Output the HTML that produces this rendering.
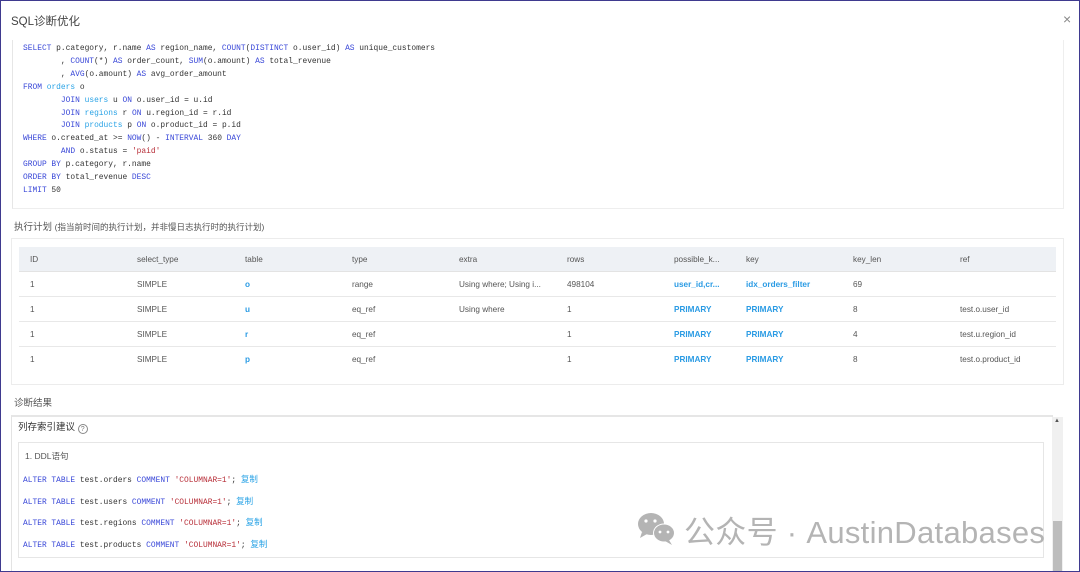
<!DOCTYPE html>
<html style="width:1080px;height:572px;overflow:hidden"><head><meta charset="utf-8"><style>
*{margin:0;padding:0;box-sizing:border-box}
body{width:1080px;height:572px;overflow:hidden;background:#fff;font-family:"Liberation Sans","Noto Sans CJK SC",sans-serif;color:#333;position:relative}
.abs{position:absolute;white-space:nowrap}
.mono{font-family:"Liberation Mono","Noto Sans CJK SC",monospace;font-size:7.9px;color:#333}
.k{color:#3a48d8}.t{color:#2aa3e6}.s{color:#b8303a}
.sm{font-size:8.2px;color:#555}
.lnk{color:#2a9be4;font-weight:bold}
.cp{font-family:'Liberation Sans','Noto Sans CJK SC',sans-serif;font-size:8.5px}
</style></head><body>
<div class="abs" style="left:11px;top:13px;font-size:11.5px;color:#444">SQL诊断优化</div>
<div class="abs" style="left:1063px;top:11px;font-size:14px;color:#888">×</div>
<div class="abs" style="left:12px;top:40px;width:1052px;height:169px;border-left:1px solid #e6e6e6;border-bottom:1px solid #eee;border-right:1px solid #eee"></div>
<div class="abs mono" style="left:23px;top:43px;line-height:12.9px">
<span class="k">SELECT</span> p.category, r.name <span class="k">AS</span> region_name, <span class="k">COUNT</span>(<span class="k">DISTINCT</span> o.user_id) <span class="k">AS</span> unique_customers<br>
&nbsp;&nbsp;&nbsp;&nbsp;&nbsp;&nbsp;&nbsp;&nbsp;, <span class="k">COUNT</span>(*) <span class="k">AS</span> order_count, <span class="k">SUM</span>(o.amount) <span class="k">AS</span> total_revenue<br>
&nbsp;&nbsp;&nbsp;&nbsp;&nbsp;&nbsp;&nbsp;&nbsp;, <span class="k">AVG</span>(o.amount) <span class="k">AS</span> avg_order_amount<br>
<span class="k">FROM</span> <span class="t">orders</span> o<br>
&nbsp;&nbsp;&nbsp;&nbsp;&nbsp;&nbsp;&nbsp;&nbsp;<span class="k">JOIN</span> <span class="t">users</span> u <span class="k">ON</span> o.user_id = u.id<br>
&nbsp;&nbsp;&nbsp;&nbsp;&nbsp;&nbsp;&nbsp;&nbsp;<span class="k">JOIN</span> <span class="t">regions</span> r <span class="k">ON</span> u.region_id = r.id<br>
&nbsp;&nbsp;&nbsp;&nbsp;&nbsp;&nbsp;&nbsp;&nbsp;<span class="k">JOIN</span> <span class="t">products</span> p <span class="k">ON</span> o.product_id = p.id<br>
<span class="k">WHERE</span> o.created_at &gt;= <span class="k">NOW</span>() - <span class="k">INTERVAL</span> 360 <span class="k">DAY</span><br>
&nbsp;&nbsp;&nbsp;&nbsp;&nbsp;&nbsp;&nbsp;&nbsp;<span class="k">AND</span> o.status = <span class="s">'paid'</span><br>
<span class="k">GROUP BY</span> p.category, r.name<br>
<span class="k">ORDER BY</span> total_revenue <span class="k">DESC</span><br>
<span class="k">LIMIT</span> 50</div>

<div class="abs" style="left:14px;top:219px;font-size:9.5px;color:#555">执行计划 <span style="font-size:8.5px">(指当前时间的执行计划，并非慢日志执行时的执行计划)</span></div>
<div class="abs" style="left:11px;top:238px;width:1053px;height:147px;border:1px solid #ececec"></div>
<div class="abs" style="left:19px;top:247px;width:1037px;height:25px;background:#eef1f5;border-bottom:1px solid #e3e3e3"></div>
<div class="abs" style="left:19px;top:296px;width:1037px;border-top:1px solid #e8e8e8"></div>
<div class="abs" style="left:19px;top:321px;width:1037px;border-top:1px solid #e8e8e8"></div>
<div class="abs" style="left:19px;top:346px;width:1037px;border-top:1px solid #e8e8e8"></div>
<div class="abs sm" style="left:30px;top:255px">ID</div><div class="abs sm" style="left:137px;top:255px">select_type</div><div class="abs sm" style="left:245px;top:255px">table</div><div class="abs sm" style="left:352px;top:255px">type</div><div class="abs sm" style="left:459px;top:255px">extra</div><div class="abs sm" style="left:567px;top:255px">rows</div><div class="abs sm" style="left:674px;top:255px">possible_k...</div><div class="abs sm" style="left:746px;top:255px">key</div><div class="abs sm" style="left:853px;top:255px">key_len</div><div class="abs sm" style="left:960px;top:255px">ref</div>

<div class="abs sm" style="left:30px;top:280px">1</div><div class="abs sm" style="left:137px;top:280px">SIMPLE</div><div class="abs sm lnk" style="left:245px;top:280px">o</div><div class="abs sm" style="left:352px;top:280px">range</div><div class="abs sm" style="left:459px;top:280px">Using where; Using i...</div><div class="abs sm" style="left:567px;top:280px">498104</div><div class="abs sm lnk" style="left:674px;top:280px">user_id,cr...</div><div class="abs sm lnk" style="left:746px;top:280px">idx_orders_filter</div><div class="abs sm" style="left:853px;top:280px">69</div>

<div class="abs sm" style="left:30px;top:305px">1</div><div class="abs sm" style="left:137px;top:305px">SIMPLE</div><div class="abs sm lnk" style="left:245px;top:305px">u</div><div class="abs sm" style="left:352px;top:305px">eq_ref</div><div class="abs sm" style="left:459px;top:305px">Using where</div><div class="abs sm" style="left:567px;top:305px">1</div><div class="abs sm lnk" style="left:674px;top:305px">PRIMARY</div><div class="abs sm lnk" style="left:746px;top:305px">PRIMARY</div><div class="abs sm" style="left:853px;top:305px">8</div><div class="abs sm" style="left:960px;top:305px">test.o.user_id</div>

<div class="abs sm" style="left:30px;top:330px">1</div><div class="abs sm" style="left:137px;top:330px">SIMPLE</div><div class="abs sm lnk" style="left:245px;top:330px">r</div><div class="abs sm" style="left:352px;top:330px">eq_ref</div><div class="abs sm" style="left:567px;top:330px">1</div><div class="abs sm lnk" style="left:674px;top:330px">PRIMARY</div><div class="abs sm lnk" style="left:746px;top:330px">PRIMARY</div><div class="abs sm" style="left:853px;top:330px">4</div><div class="abs sm" style="left:960px;top:330px">test.u.region_id</div>

<div class="abs sm" style="left:30px;top:355px">1</div><div class="abs sm" style="left:137px;top:355px">SIMPLE</div><div class="abs sm lnk" style="left:245px;top:355px">p</div><div class="abs sm" style="left:352px;top:355px">eq_ref</div><div class="abs sm" style="left:567px;top:355px">1</div><div class="abs sm lnk" style="left:674px;top:355px">PRIMARY</div><div class="abs sm lnk" style="left:746px;top:355px">PRIMARY</div><div class="abs sm" style="left:853px;top:355px">8</div><div class="abs sm" style="left:960px;top:355px">test.o.product_id</div>

<div class="abs" style="left:14px;top:395px;font-size:9.5px;color:#555">诊断结果</div>
<div class="abs" style="left:11px;top:415px;width:1042px;height:160px;border:1px solid #e3e3e3;border-top:2px solid #e6e6e6"></div>
<div class="abs" style="left:1052px;top:417px;width:11px;height:155px;background:#f0f0f0"></div>
<div class="abs" style="left:1053px;top:521px;width:9px;height:51px;background:#bdbdbd"></div>
<div class="abs" style="left:1054px;top:418px;font-size:6px;color:#555">▲</div>
<div class="abs" style="left:18px;top:419px;font-size:9.5px;color:#333">列存索引建议 <span style="display:inline-block;width:10px;height:10px;border:1px solid #888;border-radius:50%;font-size:7px;text-align:center;line-height:9px;color:#777;vertical-align:-1px">?</span></div>
<div class="abs" style="left:18px;top:442px;width:1026px;height:116px;border:1px solid #e6e6e6"></div>
<div class="abs" style="left:25px;top:450px;font-size:8.5px;color:#555">1. DDL语句</div>
<div class="abs mono" style="left:23px;top:473px"><span class="k">ALTER TABLE</span> test.orders <span class="k">COMMENT</span> <span class="s">'COLUMNAR=1'</span>; <span class="t cp">复制</span></div>
<div class="abs mono" style="left:23px;top:495px"><span class="k">ALTER TABLE</span> test.users <span class="k">COMMENT</span> <span class="s">'COLUMNAR=1'</span>; <span class="t cp">复制</span></div>
<div class="abs mono" style="left:23px;top:516px"><span class="k">ALTER TABLE</span> test.regions <span class="k">COMMENT</span> <span class="s">'COLUMNAR=1'</span>; <span class="t cp">复制</span></div>
<div class="abs mono" style="left:23px;top:538px"><span class="k">ALTER TABLE</span> test.products <span class="k">COMMENT</span> <span class="s">'COLUMNAR=1'</span>; <span class="t cp">复制</span></div>

<svg class="abs" style="left:636px;top:511px" width="42" height="36" viewBox="0 0 42 36"><ellipse cx="15" cy="13" rx="13" ry="11" fill="#b4b4b4"/><path d="M6 21 L4 27 L11 23Z" fill="#b4b4b4"/><ellipse cx="28" cy="22" rx="11" ry="9.5" fill="#fff"/><ellipse cx="28" cy="22" rx="10" ry="8.5" fill="#b4b4b4"/><path d="M33 29 L36 34 L29 30Z" fill="#b4b4b4"/><circle cx="10" cy="10" r="1.6" fill="#fff"/><circle cx="19" cy="10" r="1.6" fill="#fff"/><circle cx="24" cy="21" r="1.4" fill="#fff"/><circle cx="32" cy="21" r="1.4" fill="#fff"/></svg>
<div class="abs" style="left:684px;top:507px;font-size:31px;color:#b4b4b4;font-family:'Liberation Sans','Noto Sans CJK SC',sans-serif;letter-spacing:0.3px">公众号 · AustinDatabases</div>
<div class="abs" style="left:0;top:0;width:1080px;height:572px;border:1px solid #3f3a8f;z-index:10"></div>
</body></html>
